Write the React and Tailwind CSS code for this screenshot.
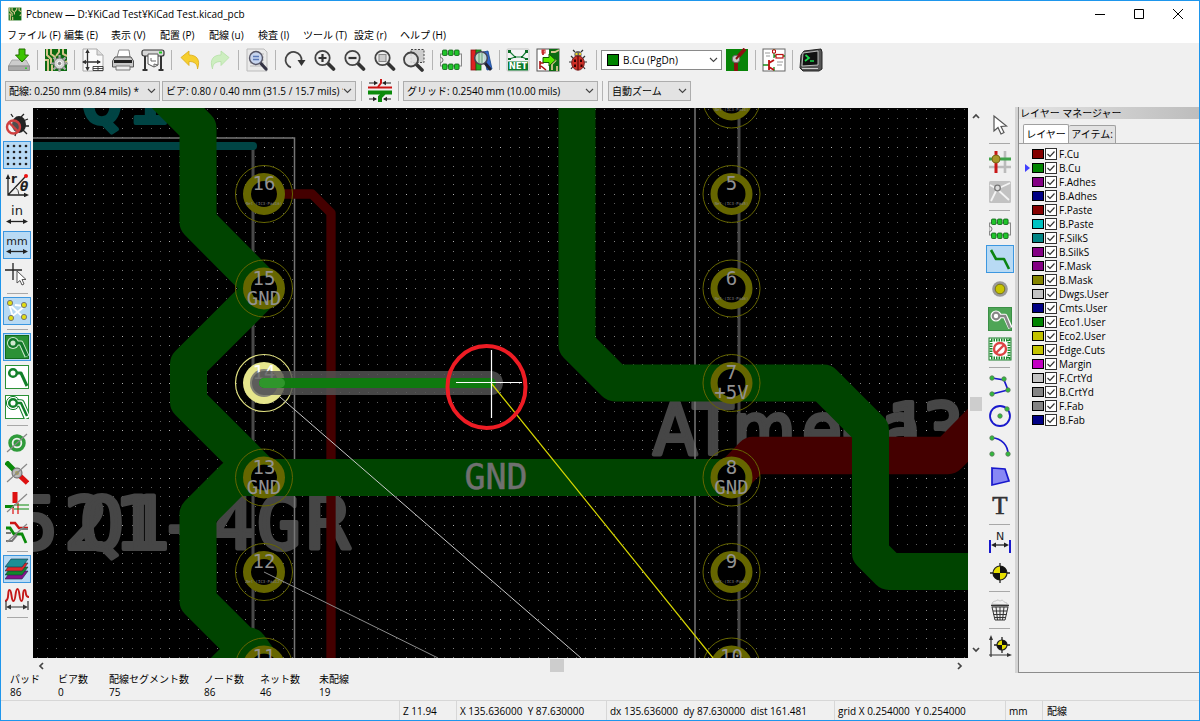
import React from "react";

const UI = "font-['Open_Sans','Noto_Sans_CJK_JP',sans-serif]";

const G = "#0a8a0a";
const R = "#cc1414";

/* ---------- small building blocks ---------- */

function Icon({ children, size = 24 }) {
  return (
    <svg width={size} height={size} viewBox="0 0 24 24" fill="none" aria-hidden="true" className="block">
      {children}
    </svg>
  );
}

function ToolButton({ label, active, children }) {
  return (
    <button
      type="button"
      aria-label={label}
      title={label}
      className={
        active
          ? "my-px flex h-7 w-7 shrink-0 items-center justify-center border border-[#3c97e0] bg-[#b8daf4]"
          : "flex h-[30px] w-[30px] shrink-0 items-center justify-center"
      }
    >
      {children}
    </button>
  );
}

function VSep() {
  return (
    <div className="flex h-6 w-[7px] shrink-0 justify-center">
      <div className="h-5 w-px self-center bg-[#b4b4b4]" />
    </div>
  );
}

function HSep({ tall }) {
  return (
    <div className={tall ? "flex h-[7px] w-full shrink-0 items-center justify-center" : "flex h-[6px] w-full shrink-0 items-center justify-center"}>
      <div className="h-px w-[21px] bg-[#a8a8a8]" />
    </div>
  );
}

function Chevron() {
  return (
    <svg width="9" height="6" viewBox="0 0 9 6" className="pointer-events-none absolute right-[4px] top-1/2 -translate-y-1/2">
      <path d="M1 1l3.500 3.500L8 1" fill="none" stroke="#444" strokeWidth="1.100" />
    </svg>
  );
}

function Combo({ label, value, width, white, swatch }) {
  return (
    <div className={"relative shrink-0 " + width}>
      <select
        aria-label={label}
        className={
          "block h-5 w-full appearance-none border pr-3 text-[10px] leading-4 text-black outline-none " +
          (white ? "border-[#8a8a8a] bg-white pl-[21px]" : "border-[#adadad] bg-[#e3e3e3] pl-[3px]")
        }
      >
        <option>{value}</option>
      </select>
      {swatch && <span className="pointer-events-none absolute left-[6px] top-[4px] h-3 w-3 border border-black bg-[#008400]" />}
      <Chevron />
    </div>
  );
}

/* ---------- icons ---------- */

const BoardBg = (
  <>
    <rect x="1" y="1" width="22" height="22" fill="#0c6b12" />
    <path d="M3 1v6l4 4v5M7 1v5l4 3v4M15 1v3l-3 4M19 1v5l4 2M1 12h3v11M8 17v6M23 13l-3 2" stroke="#d6c58c" strokeWidth="2" />
  </>
);

const Lens = ({ sign }) => (
  <>
    <path d="M16 15.500l5.500 5.500" stroke="#333" strokeWidth="3.600" strokeLinecap="round" />
    <circle cx="10.500" cy="10" r="7.200" fill="#ededed" stroke="#444" strokeWidth="1.800" />
    {sign}
  </>
);

const Chip = (
  <>
    <rect x="1.500" y="6" width="21" height="12" fill="#f0f0f0" stroke="#888" />
    <path d="M1.500 9.500a2.500 2.500 0 010 5" stroke="#777" fill="#f0f0f0" />
    {[4, 10, 16].map((x) => (
      <g key={x}>
        <rect x={x - 0.5} y="2" width="4.600" height="5.500" rx="1" fill="#1fc42a" stroke="#0d5c14" strokeWidth=".8" />
        <rect x={x - 0.5} y="16" width="4.600" height="5.500" rx="1" fill="#1fc42a" stroke="#0d5c14" strokeWidth=".8" />
      </g>
    ))}
  </>
);

const Strike = <path d="M2 21L22 3" stroke="#888" strokeWidth="1.200" />;

const Target = ({ cx = 12, cy = 12, r = 7 }) => (
  <g>
    <path d={`M${cx} ${cy - r - 3}V${cy + r + 3}M${cx - r - 3} ${cy}H${cx + r + 3}`} stroke="#222" strokeWidth="1.300" />
    <circle cx={cx} cy={cy} r={r} fill="#e6df00" stroke="#222" strokeWidth="1.200" />
    <path d={`M${cx} ${cy}V${cy - r}A${r} ${r} 0 01${cx + r} ${cy}zM${cx} ${cy}V${cy + r}A${r} ${r} 0 01${cx - r} ${cy}z`} fill="#111" />
  </g>
);

const Node = ({ x, y }) => <circle cx={x} cy={y} r="2.200" fill="#2ebd3a" stroke="#5b7a5b" strokeWidth=".9" />;

const topIcons = {
  save: (
    <>
      <path d="M5 12h14l3.500 6H1.500z" fill="#ccc" stroke="#999" strokeWidth=".8" />
      <path d="M1.500 18h21v4.500h-21z" fill="#a9a9a9" stroke="#888" strokeWidth=".8" />
      <rect x="18" y="19.500" width="2" height="1.500" fill="#3c3" />
      <path d="M12 1h6v6h3.500L15 14 8.500 7H12z" fill="#3cc400" stroke="#226f00" />
    </>
  ),
  board: (
    <>
      {BoardBg}
      <path d="M15.500 7v17M7 15.500h17M9.500 9.500l12 12M21.500 9.500l-12 12" stroke="#aaa" strokeWidth="2.200" />
      <circle cx="15.500" cy="15.500" r="5.500" fill="#d4d4d4" stroke="#777" />
      <circle cx="15.500" cy="15.500" r="2.200" fill="#888" stroke="#fff" />
    </>
  ),
  page: (
    <>
      <path d="M2 1h14l6 6v16H2z" fill="#fafafa" stroke="#aaa" />
      <path d="M16 1v6h6" fill="#ddd" stroke="#aaa" />
      <path d="M6.500 3v19M2 14h17" stroke="#333" strokeWidth="1.300" />
      <path d="M6.500 1l2.200 4H4.300zM6.500 23l2.200-4H4.300zM1 14l4-2.200v4.400zM20 14l-4-2.200v4.400z" fill="#333" />
      <path d="M12 18.500h10v4H12zM17 18.500v4M12 20.500h10" fill="#fff" stroke="#333" strokeWidth=".9" />
    </>
  ),
  print: (
    <>
      <path d="M6 9L8 2h10l1 7z" fill="#fff" stroke="#888" />
      <path d="M4 9h16l2.500 4v6h-21v-6z" fill="#c9c9c9" stroke="#555" />
      <path d="M3 12h18v3H3z" fill="#222" />
      <path d="M5 18h14v4H5z" fill="#eee" stroke="#777" />
    </>
  ),
  plot: (
    <>
      <rect x="1" y="2" width="22" height="6" rx="2" fill="#d8d8d8" stroke="#333" strokeWidth="1.200" />
      <rect x="18" y="3.500" width="3" height="2" fill="#2c2" />
      <path d="M4 8v14M20 8v14M1.500 22h5M17.500 22h5" stroke="#333" strokeWidth="2" />
      <path d="M7 6h10v11l-4 2-6-3z" fill="#fff" stroke="#555" />
      <path d="M10 10v3h5M17 17l-4-1v3" stroke="#666" />
    </>
  ),
  undo: <path d="M3 9.500l8-6.500v4c7 0 12 4 8.500 14 0-5-3-7.500-8.500-7.500v4z" fill="#f6cf2f" stroke="#dba915" strokeWidth=".8" />,
  redo: <path d="M21 9.500L13 3v4C6 7 1 11 4.500 21c0-5 3-7.500 8.500-7.500v4z" fill="#cdeec0" stroke="#b4dfa5" strokeWidth=".8" />,
  find: (
    <>
      <path d="M2 1h17l3 3v19H2z" fill="#e9e9e9" stroke="#bbb" />
      <path d="M5 6h14M5 9h14M5 12h14M5 15h14M5 18h14" stroke="#b9b9b9" />
      <path d="M15.500 15l5.500 6" stroke="#334" strokeWidth="3.200" strokeLinecap="round" />
      <circle cx="11" cy="10" r="6.500" fill="#c6d4ee" stroke="#556" strokeWidth="1.400" />
      <path d="M8 8.500h6M8 11.500h6" stroke="#5a78b8" strokeWidth="1.400" />
    </>
  ),
  redraw: (
    <>
      <path d="M9 19.500A8 8 0 1119.500 13" stroke="#444" strokeWidth="1.800" />
      <path d="M15.500 12h8l-4 6z" fill="#333" />
    </>
  ),
  zin: <Lens sign={<path d="M6.500 10h8M10.500 6v8" stroke="#333" strokeWidth="2.200" />} />,
  zout: <Lens sign={<path d="M6.500 10h8" stroke="#333" strokeWidth="2.200" />} />,
  zfit: <Lens sign={<rect x="7" y="6.500" width="7" height="7" fill="#ccc" stroke="#888" />} />,
  zsel: (
    <>
      <rect x="9" y="1.500" width="13" height="13" fill="#ccc" stroke="#444" strokeDasharray="2 1.500" />
      <path d="M14 16l6 6" stroke="#333" strokeWidth="3.600" strokeLinecap="round" />
      <circle cx="9" cy="11.500" r="7" fill="#e4e4e4" fillOpacity=".85" stroke="#444" strokeWidth="1.800" />
    </>
  ),
  chip: Chip,
  lib: (
    <>
      <rect x="2" y="2" width="5" height="20" fill="#d22" stroke="#811" strokeWidth=".8" />
      <rect x="7" y="2" width="5" height="20" fill="#2a2" stroke="#161" strokeWidth=".8" />
      <path d="M14 4l5-1 4 18-5 1z" fill="#36c" stroke="#148" strokeWidth=".8" />
      <path d="M16 15l5 6" stroke="#223" strokeWidth="3" strokeLinecap="round" />
      <circle cx="12" cy="10" r="6.300" fill="#cfe3dc" fillOpacity=".9" stroke="#445" strokeWidth="1.500" />
      <path d="M10 5v10M13 5v10" stroke="#5b9d74" />
    </>
  ),
  net: (
    <>
      <rect x="1" y="1" width="22" height="22" rx="1" fill="#f4f4f4" stroke="#c4c4c4" />
      <path d="M3.500 3.500L9 9h7l4.500-5.500M3.500 11L9 9M20.500 11L16 9" stroke="#18803a" strokeWidth="1.200" />
      <path d="M2 2h3v3H2zM19 2h3v3h-3zM2 10h3v2H2zM19 10h3v2h-3zM8 8h2v2H8zM15 8h2v2h-2z" fill="#0b6d24" />
      <rect x="2" y="13.500" width="20" height="9" fill="#0c7a2c" />
      <text x="12" y="21.200" textAnchor="middle" fontSize="8.500" fontWeight="700" fill="#fff" fontFamily="DejaVu Sans">NET</text>
    </>
  ),
  upd: (
    <>
      <rect x="1" y="1" width="22" height="22" fill="#fff" stroke="#555" />
      <path d="M13 1h10v22H13z" fill="#0c6b12" />
      <path d="M15 4h4l4-2M16 22v-6l4-4M21 23v-5" stroke="#d6c58c" strokeWidth="1.800" />
      <path d="M7 2v5M4 13v8M4 15h3l3-3M5 18l5 4" stroke="#a11" strokeWidth="1.600" />
      <rect x="6" y="2" width="3" height="3" stroke="#c22" />
      <path d="M7 9.500h6V6l6.500 6L13 18v-3.500H7z" fill="#5be800" stroke="#125800" />
    </>
  ),
  bug: (
    <>
      <path d="M5 8l3 3M19 8l-3 3M3 14h4M21 14h-4M5 21l3-4M19 21l-3-4M9 4L7 2M15 4l2-2" stroke="#333" strokeWidth="1.200" />
      <circle cx="12" cy="6.500" r="3.600" fill="#666" />
      <path d="M9.500 5h2v2h-2zM13 5h2v2h-2z" fill="#e8cf20" />
      <ellipse cx="12" cy="15" rx="6.300" ry="7.200" fill="#cf2f26" stroke="#7a2020" />
      <path d="M12 8v14" stroke="#400" />
      <path d="M8 11.500h2V14H8zM14 11.500h2V14h-2zM8 16.500h2V19H8zM14.500 16.500h2V19h-2z" fill="#300" />
    </>
  ),
  layerpair: (
    <>
      <rect x="1" y="1" width="22" height="22" fill="#078407" />
      <path d="M11 23V11l9-10" stroke="#8b1010" strokeWidth="3.800" />
      <circle cx="11" cy="11" r="3.800" fill="#c9c9c9" stroke="#666" />
      <path d="M11 11l3-3.500" stroke="#8b1010" strokeWidth="2" />
    </>
  ),
  sch: (
    <>
      <rect x="1" y="1" width="22" height="22" fill="#fff" stroke="#666" />
      <path d="M12 1v9M12 8h11" stroke="#1a8a1a" strokeWidth="1.300" />
      <path d="M1 17h6M12 19v4" stroke="#1a8a1a" strokeWidth="1.300" />
      <rect x="14" y="6.500" width="7" height="3.500" fill="#fff" stroke="#b11" strokeWidth="1.200" />
      <path d="M10.500 2h3v3h-3z" fill="#fff" stroke="#b11" />
      <path d="M7 12v10M7 15l5-3M7 19l5 3" stroke="#b11" strokeWidth="1.800" />
      <path d="M3 5h5M4 8h4M15 14h6M15 17h5" stroke="#999" />
    </>
  ),
  console: (
    <>
      <path d="M5 3l17-2 1 3v17l-3 2H4l-3-3 1-13z" fill="#555" stroke="#222" />
      <path d="M4 5l15-2v14l-16 1z" fill="#111" stroke="#ddd" strokeWidth=".8" />
      <path d="M6.500 7l3.500 3-4 3M11 13h4" stroke="#19d84a" strokeWidth="1.700" />
      <path d="M3 20.500h16" stroke="#ccc" />
    </>
  ),
  width: (
    <>
      <path d="M0 8.500h24" stroke={R} strokeWidth="2" />
      <path d="M0 13.500h24" stroke={G} strokeWidth="4" />
      <path d="M13 0v4l-3 4" stroke={R} strokeWidth="2" />
      <path d="M16 14l-4 4v5" stroke={G} strokeWidth="4" />
      <path d="M1 4h7M23 4h-7M1 20h7M23 20h-7" stroke="#222" strokeWidth="1.100" />
      <path d="M10 4L6 1.800v4.400zM14 4l4-2.200v4.400zM9 20l-4-2.200v4.400zM15 20l4-2.200v4.400z" fill="#222" />
    </>
  ),
};

const Pad = ({ ring, fill, lead }) => (
  <>
    <path d="M9 8h7l6 13" stroke={ring} strokeWidth={lead} strokeLinejoin="round" />
    <circle cx="8" cy="8" r="3.800" fill={fill} stroke={ring} strokeWidth="2.500" />
  </>
);

const leftIcons = {
  drc: (
    <>
      <path d="M8 4L6 1M16 4l3-3M18 8l5-2M19 13h5M18 17l4 4M11 19l-1 4" stroke="#222" strokeWidth="1.300" />
      <ellipse cx="14" cy="11.500" rx="7" ry="8.500" fill="#222" />
      <circle cx="8.500" cy="14" r="6.500" fill="#fff" fillOpacity=".2" stroke="#cf4040" strokeWidth="2.400" />
      <path d="M4 9.500l9 9" stroke="#cf4040" strokeWidth="2.400" />
    </>
  ),
  grid: (
    <>
      {[3, 9, 15, 21].map((y) => [3, 9, 15, 21].map((x) => <circle key={x + "-" + y} cx={x} cy={y} r="1.300" fill="#222" />))}
    </>
  ),
  polar: (
    <>
      <path d="M3 4v18h18M3 22L20 4" stroke="#222" strokeWidth="1.300" />
      <path d="M3 1l2.300 5H.7zM24 22l-5-2.300v4.600z" fill="#222" />
      <path d="M10 14q4 3 4 8" stroke="#444" />
      <circle cx="21" cy="3" r="2" fill="#e11" />
      <text x="6" y="10" fontSize="12" fontWeight="700" fontFamily="DejaVu Sans" fill="#222">r</text>
      <text x="15" y="18" fontSize="12" fontWeight="700" fontStyle="italic" fontFamily="DejaVu Sans" fill="#222">θ</text>
    </>
  ),
  inch: (
    <>
      <text x="12" y="12" textAnchor="middle" fontSize="13" fontFamily="DejaVu Sans" fill="#222">in</text>
      <path d="M4 18.500h16" stroke="#222" strokeWidth="1.300" />
      <path d="M1 18.500l5-2.600v5.200zM23 18.500l-5-2.600v5.200z" fill="#222" />
    </>
  ),
  mm: (
    <>
      <text x="12" y="12" textAnchor="middle" fontSize="11" fontFamily="DejaVu Sans" fill="#222">mm</text>
      <path d="M4 18.500h16" stroke="#222" strokeWidth="1.300" />
      <path d="M1 18.500l5-2.600v5.200zM23 18.500l-5-2.600v5.200z" fill="#222" />
    </>
  ),
  cursor: (
    <>
      <path d="M8 0v17M0 7h17" stroke="#222" strokeWidth="1.300" />
      <path d="M12 8v12l3-2.500 2 4.500 2-1-2-4.500h4z" fill="#fff" stroke="#555" />
    </>
  ),
  rats: (
    <>
      <path d="M4 5l15 14M5 19L20 7M4 5l4 13M20 7L10 6" stroke="#fff" strokeWidth="1.800" />
      {[[5, 4], [19, 6], [6, 19], [19, 18]].map(([x, y]) => (
        <circle key={x + "," + y} cx={x} cy={y} r="2.600" fill="#e1dc10" stroke="#777" />
      ))}
    </>
  ),
  zoneFill: (
    <>
      <rect x=".500" y=".500" width="23" height="23" fill="#2b9136" stroke="#116b1c" />
      <path d="M9 8h7l6 13.500" stroke="#cfe8cf" strokeWidth="5" strokeLinejoin="round" />
      <circle cx="8" cy="8" r="6" fill="#cfe8cf" />
      <Pad ring="#12772a" fill="#cfe8cf" lead={3} />
    </>
  ),
  zoneOff: (
    <>
      <rect x=".500" y=".500" width="23" height="23" fill="#fff" stroke="#2b9136" />
      <Pad ring="#12802a" fill="#fff" lead={3} />
    </>
  ),
  zoneOut: (
    <>
      <rect x=".500" y=".500" width="23" height="23" fill="#fff" stroke="#2b9136" />
      <circle cx="8" cy="8" r="6.600" fill="#fff" stroke="#12802a" />
      <path d="M12 8h4l6 14" stroke="#12802a" strokeWidth="7.500" strokeLinejoin="round" />
      <path d="M9 8h7l6.500 15" stroke="#fff" strokeWidth="5.500" strokeLinejoin="round" />
      <Pad ring="#12802a" fill="#fff" lead={2.5} />
    </>
  ),
  pads: (
    <>
      <circle cx="12" cy="12" r="7" stroke="#2f9b3a" strokeWidth="3.500" />
      <circle cx="12" cy="12" r="3.500" fill="#2f9b3a" />
      {Strike}
    </>
  ),
  vias: (
    <>
      <path d="M1 1l9 9" stroke={G} strokeWidth="5" />
      <path d="M13 13l9.500 9" stroke="#d11" strokeWidth="5" />
      <circle cx="12" cy="12" r="5" fill="#b9b9b9" stroke="#666" />
      <circle cx="12" cy="12" r="2" fill="#aaa05a" />
      {Strike}
    </>
  ),
  tracks: (
    <>
      <path d="M10 1v11" stroke="#d11" strokeWidth="5" />
      <path d="M8 14v9M13 12v11" stroke="#d11" strokeWidth="1.200" />
      <path d="M0 15.500h9" stroke={G} strokeWidth="3" />
      <path d="M9 14h15M9 18h15" stroke={G} strokeWidth="1.200" />
      {Strike}
    </>
  ),
  contrast: (
    <>
      <path d="M5 2h5l4 5h9" stroke={R} strokeWidth="2.500" />
      <path d="M1 7h4l4 6h8l4 9" stroke={G} strokeWidth="2.800" />
      <path d="M1 12h5M1 20h6l5-6M15 8h8" stroke="#777" strokeWidth="2" />
      {Strike}
    </>
  ),
  layers: (
    <>
      {[["#8a108a", 14], ["#12872a", 10], ["#e02828", 6], ["#1d8f95", 2]].map(([c, y]) => (
        <path key={c} d={`M6 ${y}h17l-6 8H0z`} fill={c} stroke="#134" strokeWidth=".6" />
      ))}
    </>
  ),
  micro: (
    <>
      <path d="M0 14c5 0 2-11 4.500-11S6 14 8.500 14 10 2 12.500 2 14 14 16.500 14 17 3 19.500 3 19 10 24 10" stroke="#c41818" strokeWidth="1.900" />
      <path d="M1 14v9M23 14v9M4 20h16" stroke="#333" strokeWidth="1.200" />
      <path d="M1 20l5-2.500v5zM23 20l-5-2.500v5z" fill="#333" />
    </>
  ),
};

const rightIcons = {
  select: <path d="M6 3v15l4-3.500 3 6.500 3-1.500-3-6 5.500-.5z" fill="#fff" stroke="#555" strokeWidth="1.200" />,
  highlight: (
    <>
      <path d="M17 1v22M1 17h22" stroke="#bbb" strokeWidth="2.600" />
      <path d="M8 1v22" stroke="#c81616" strokeWidth="3" />
      <path d="M1 9h22" stroke="#3fa34a" strokeWidth="3" />
      <circle cx="8" cy="9" r="4" fill="#a8972a" stroke="#7a6a18" />
    </>
  ),
  localRats: (
    <>
      <rect x="1" y="1" width="22" height="22" rx="1.500" fill="#c2c2c2" />
      <path d="M9 9L2 5M9 9l13-6M9 9L3 21M9 9l12 11" stroke="#f4f4f4" strokeWidth="1.800" />
      <circle cx="9.500" cy="8" r="2.800" fill="#ddd" stroke="#777" strokeWidth="1.300" />
    </>
  ),
  chip: Chip,
  route: <path d="M3 3l5 9h8l5 10" stroke="#0b8413" strokeWidth="2.600" strokeLinejoin="round" />,
  via: (
    <>
      <circle cx="12" cy="12" r="7.800" fill="#999" />
      <circle cx="12" cy="12" r="4.800" fill="#c8c400" stroke="#77731a" />
    </>
  ),
  zone: (
    <>
      <rect x=".500" y=".500" width="23" height="23" fill="#4ea556" stroke="#3b8f45" />
      <path d="M9 9h8l5.500 12" stroke="#fff" strokeWidth="4.600" strokeLinejoin="round" />
      <circle cx="8" cy="9" r="5.500" fill="#fff" />
      <path d="M9 9h8l5 12" stroke="#888" strokeWidth="2.600" />
      <circle cx="8" cy="9" r="3.300" fill="#fff" stroke="#888" strokeWidth="2.200" />
    </>
  ),
  keepout: (
    <>
      <rect x="1" y="1" width="22" height="22" fill="#fff" stroke="#1a7f2b" strokeWidth="1" />
      <rect x="3" y="3" width="18" height="18" stroke="#1a8a2b" strokeWidth="3" strokeDasharray="1.500 1" />
      <circle cx="12" cy="12" r="6" fill="#fff" stroke="#dc4444" strokeWidth="2.400" />
      <path d="M8 16l8-8" stroke="#dc4444" strokeWidth="2.400" />
    </>
  ),
  line: (
    <>
      <path d="M4 4l12 2 4 10L4 20" stroke="#1818cc" strokeWidth="1.700" />
      <Node x={4} y={4} /><Node x={16} y={5} /><Node x={20} y={16} /><Node x={4} y={20} />
    </>
  ),
  circle: (
    <>
      <circle cx="12" cy="12" r="10" stroke="#1818cc" strokeWidth="1.800" />
      <Node x={12} y={12} /><Node x={19} y={5} />
    </>
  ),
  arc: (
    <>
      <path d="M4 4c10 0 16 8 16 16" stroke="#1818cc" strokeWidth="1.700" />
      <Node x={4} y={4} /><Node x={4} y={20} /><Node x={20} y={20} />
    </>
  ),
  poly: <path d="M4 4l13 1 4 12-17 4z" fill="#8888f4" stroke="#1818cc" strokeWidth="1.700" />,
  text: <text x="12" y="20" textAnchor="middle" fontSize="25" fontFamily="Liberation Serif" fill="#333" stroke="#333" strokeWidth=".7">T</text>,
  dim: (
    <>
      <text x="12" y="9" textAnchor="middle" fontSize="11" fontFamily="DejaVu Sans" fill="#222">N</text>
      <path d="M2 9v13M22 9v13" stroke="#1818cc" strokeWidth="2" />
      <path d="M5 14h14" stroke="#222" strokeWidth="1.300" />
      <path d="M3 14l5-2.500v5zM21 14l-5-2.500v5z" fill="#222" />
    </>
  ),
  target: <Target />,
  trash: (
    <>
      <path d="M4 6c1-4 4-2 5-4 3 0 2 2 5 0 2 1 1 2 5 3v2z" fill="#f0f0f0" stroke="#c4c4c4" />
      <path d="M3 7.500h18" stroke="#333" strokeWidth="1.600" />
      <path d="M4 9l3 13h10l3-13z" fill="#eee" stroke="#333" />
      <path d="M8 9l1.500 13M12 9v13M16 9l-1.500 13M5 13h14M5.500 16.500h13M6.500 19.500h11" stroke="#333" />
    </>
  ),
  origin: (
    <>
      <path d="M3 4v18M1 20h20" stroke="#333" strokeWidth="1.200" />
      <path d="M3 0l2 5H1zM24 20l-5-2v4z" fill="#333" />
      <Target cx={14} cy={10} r={5} />
    </>
  ),
};

/* ---------- board drawing ---------- */

function dots(level) {
  let d = "";
  for (let i = -25; i <= 75; i++) {
    for (let j = -30; j <= 30; j++) {
      const onMajor = i % 5 === 0 && j % 5 === 0;
      const onMid = !onMajor && (i % 5 === 0 || j % 5 === 0);
      const kind = onMajor ? 2 : onMid ? 1 : 0;
      if (kind !== level) continue;
      d += `M${Math.round(264 + i * 9.455)} ${Math.round(383 + j * 9.455)}h1v1h-1z`;
    }
  }
  return d;
}
const minorDots = dots(0);
const midDots = dots(1);
const majorDots = dots(2);

const leftPads = [
  { n: "16", y: 194, net: "Net-(IC3-Pad16)" },
  { n: "15", y: 288.5, big: "GND" },
  { n: "13", y: 477.5, big: "GND" },
  { n: "12", y: 572, net: "Net-(IC3-Pad12)" },
  { n: "11", y: 666.5 },
];
const rightPads = [
  { n: "4", y: 99.5, net: "Net-(IC3-Pad4)" },
  { n: "5", y: 194, net: "Net-(IC3-Pad5)" },
  { n: "6", y: 288.5, net: "Net-(IC3-Pad6)" },
  { n: "7", y: 383, big: "+5V" },
  { n: "8", y: 477.5, big: "GND" },
  { n: "9", y: 572, net: "Net-(IC3-Pad9)" },
  { n: "10", y: 666.5 },
];

function BoardPad({ x, p, hole }) {
  const mid = (21 + hole) / 2;
  return (
    <g>
      <circle cx={x} cy={p.y} r={hole} fill="#000" />
      <circle cx={x} cy={p.y} r={mid} fill="none" stroke="#666600" strokeWidth={21 - hole} />
      <circle cx={x} cy={p.y} r="28.500" fill="none" stroke="#666600" />
      <text x={x} y={p.y - 4} fontSize="19" fill="#929292">{p.n}</text>
      {p.big && <text x={x} y={p.y + 16} fontSize="19" fill="#929292">{p.big}</text>}
      {p.net && <text x={x} y={p.y + 11} fontSize="4" fill="#858585">{p.net}</text>}
    </g>
  );
}

const silkValue = [["5", 36], ["2", 86], ["1", 136], ["-", 180], ["4", 233], ["G", 279], ["R", 328]];
const silkRef = [["Q", 102], ["1", 148]];
const silkName = [["A", 675], ["T", 713], ["m", 764], ["e", 822], ["g", 862], ["a", 901], ["1", 908], ["3", 943]];

const Silk = ({ glyphs, y }) => glyphs.map(([c, x]) => <text key={c} x={x} y={y}>{c}</text>);

function Board() {
  return (
    <svg
      viewBox="33 108 935 550"
      preserveAspectRatio="xMinYMin slice"
      className="block h-full w-full bg-black"
      role="img"
      aria-label="PCB"
      fontFamily="'DejaVu Sans Mono', monospace"
    >
      <g shapeRendering="crispEdges">
        <path d={minorDots} fill="#5c5c5c" />
        <path d={midDots} fill="#808080" />
        <path d={majorDots} fill="#b4b4b4" />
      </g>

      <path d="M253 146V658M739 108V658" stroke="#484848" strokeWidth="3" />

      <g fontSize="73" strokeWidth="4" strokeLinejoin="round" textAnchor="middle">
        <g fill="#464646" stroke="#464646">
          <Silk glyphs={silkValue} y="549" />
          <Silk glyphs={silkRef} y="549" />
        </g>
        <g fill="#004444" stroke="#004444">
          <Silk glyphs={silkRef} y="123" />
        </g>
      </g>
      <g fontSize="71" fill="#464646" stroke="#464646" strokeWidth="4" strokeLinejoin="round" textAnchor="middle" fontFamily="'DejaVu Sans Condensed','DejaVu Sans',sans-serif">
        <Silk glyphs={silkName} y="454" />
      </g>
      <path d="M33 138H294.500V658M695 108V658" fill="none" stroke="#767676" strokeWidth="1.500" />
      <path d="M33 146H253" stroke="#004444" strokeWidth="8" strokeLinecap="round" />

      <g fill="none" stroke="#440000" strokeLinejoin="round" strokeLinecap="round">
        <path d="M264 194H312L331 213V670" strokeWidth="9.300" />
        <path d="M731.500 477.500L753 455.500H948L990 413" strokeWidth="37.300" />
      </g>
      <g fill="none" stroke="#004400" strokeWidth="37" strokeLinejoin="round" strokeLinecap="round">
        <path d="M150 80L198 128V222L264 288.500L188.500 364V402L264 477.500H234.500L198 514V601L264 667L249 646L200 695" />
        <path d="M264 477.500H731.500" />
        <path d="M577 90V345L615 383H823.500L870.500 430V553L889 571.500H990" />
      </g>

      <text x="496" y="489" textAnchor="middle" fontSize="35" fill="#707070" stroke="#707070" strokeWidth=".5">GND</text>

      <g textAnchor="middle">
        {leftPads.map((p) => <BoardPad key={p.n} x={264} p={p} hole={13} />)}
        {rightPads.map((p) => <BoardPad key={p.n} x={731.5} p={p} hole={14} />)}
      </g>

      <circle cx="264" cy="383" r="21" fill="#e6e68c" />
      <circle cx="264" cy="383" r="28.500" fill="none" stroke="#e0e080" strokeWidth="1.200" />
      <circle cx="264" cy="383" r="14" fill="#707070" fillOpacity=".85" />
      <text x="264" y="379" textAnchor="middle" fontSize="19" fill="#fff">14</text>
      <path d="M264 383H491" stroke="#555" strokeOpacity=".82" strokeWidth="24" strokeLinecap="round" />
      <path d="M264 383H491" stroke="#0f7a0f" strokeWidth="10" strokeLinecap="round" />
      <path d="M264 383H280" stroke="#2f962b" strokeWidth="10" strokeLinecap="round" />

      <path d="M280 397L581 658" stroke="#c8c8c8" />
      <path d="M264 572L438 658" stroke="#8c8c8c" />
      <path d="M491 383L713 658" stroke="#d8d800" strokeWidth="1.200" />
      <path d="M491.500 350V418M456 382.500H522" stroke="#fff" strokeWidth="1.200" />
      <ellipse cx="486.500" cy="387" rx="39" ry="41" fill="none" stroke="#ee1c24" strokeWidth="4" />
    </svg>
  );
}

/* ---------- layer list ---------- */

const layers = [
  ["F.Cu", "bg-[#840000]"], ["B.Cu", "bg-[#008400]"], ["F.Adhes", "bg-[#840084]"], ["B.Adhes", "bg-[#000084]"],
  ["F.Paste", "bg-[#840000]"], ["B.Paste", "bg-[#00c2c2]"], ["F.SilkS", "bg-[#008484]"], ["B.SilkS", "bg-[#840084]"],
  ["F.Mask", "bg-[#840084]"], ["B.Mask", "bg-[#848400]"], ["Dwgs.User", "bg-[#c2c2c2]"], ["Cmts.User", "bg-[#000084]"],
  ["Eco1.User", "bg-[#008400]"], ["Eco2.User", "bg-[#c2c200]"], ["Edge.Cuts", "bg-[#c2c200]"], ["Margin", "bg-[#c200c2]"],
  ["F.CrtYd", "bg-[#c2c2c2]"], ["B.CrtYd", "bg-[#848484]"], ["F.Fab", "bg-[#848484]"], ["B.Fab", "bg-[#000084]"],
];

function LayerRow({ name, color, current }) {
  return (
    <li className="flex h-[14px] items-center">
      <span className="flex w-[7px] shrink-0">
        {current && (
          <svg width="5" height="8" viewBox="0 0 5 8"><path d="M0 0l5 4-5 4z" fill="#4040ff" /></svg>
        )}
      </span>
      <button type="button" aria-label={name} className={"h-[10px] w-3 shrink-0 border border-black " + color} />
      <label className="ml-px flex items-center gap-[2px] text-[10px] leading-[14px]">
        <span className="relative block h-3 w-3">
          <input type="checkbox" defaultChecked className="block h-3 w-3 appearance-none border border-[#333] bg-white" />
          <svg width="12" height="12" viewBox="0 0 12 12" className="pointer-events-none absolute inset-0">
            <path d="M2.500 6l2.500 2.500 4.500-5" fill="none" stroke="#333" strokeWidth="1.200" />
          </svg>
        </span>
        {name}
      </label>
    </li>
  );
}

function LayerManager() {
  return (
    <aside className="flex w-[181px] shrink-0 flex-col border-b border-l border-[#8c8c8c]">
      <h2 className="h-3 overflow-hidden bg-linear-to-r from-[#e4e4e4] to-[#bdbdbd] pl-px text-[10px] leading-3 text-black">レイヤー マネージャー</h2>
      <div role="tablist" className="mt-[5px] flex h-5 items-end border-b border-[#a0a0a0] pl-[4px] text-[10px]">
        <button type="button" role="tab" aria-selected="true" className="h-[19px] w-[46px] whitespace-nowrap rounded-t-xs border border-b-0 border-[#a0a0a0] bg-white">レイヤー</button>
        <button type="button" role="tab" aria-selected="false" className="h-[18px] w-[47px] whitespace-nowrap rounded-t-xs border border-b-0 border-l-0 border-[#a0a0a0] bg-[#e2e2e2]">アイテム:</button>
      </div>
      <ul className="mt-[3px] pl-[6px]">
        {layers.map(([n, c]) => <LayerRow key={n} name={n} color={c} current={n === "B.Cu"} />)}
      </ul>
    </aside>
  );
}

/* ---------- window ---------- */

const menus = ["ファイル (F)", "編集 (E)", "表示 (V)", "配置 (P)", "配線 (u)", "検査 (I)", "ツール (T)", "設定 (r)", "ヘルプ (H)"];

const topBar = ["save", "|", "board", "|", "page", "print", "plot", "|", "undo", "redo", "|", "find", "|", "redraw", "zin", "zout", "zfit", "zsel", "|", "chip", "lib", "|", "net", "upd", "bug", "|"];
const leftBar = ["drc", "grid", "polar", "inch", "mm", "cursor", "|", "rats", "|", "zoneFill", "zoneOff", "zoneOut", "|", "pads", "vias", "tracks", "contrast", "|", "layers", "micro", "|"];
const leftActive = ["grid", "mm", "rats", "zoneFill", "layers"];
const rightBar = ["select", "|", "highlight", "localRats", "|", "chip", "route", "via", "zone", "keepout", "|", "line", "circle", "arc", "poly", "text", "|", "dim", "target", "|", "trash", "|", "origin"];

const stats = [["パッド", "86"], ["ビア数", "0"], ["配線セグメント数", "75"], ["ノード数", "86"], ["ネット数", "46"], ["未配線", "19"]];

function Arrow({ d, label }) {
  return (
    <button type="button" aria-label={label} className="flex h-4 w-4 shrink-0 items-center justify-center">
      <svg width="8" height="8" viewBox="0 0 8 8"><path d={d} fill="none" stroke="#444" strokeWidth="1.700" /></svg>
    </button>
  );
}

export default function App() {
  return (
    <div className={"flex h-screen min-h-[700px] flex-col border border-[#1e96ec] bg-[#f0f0f0] text-black " + UI}>
      <header className="flex h-[26px] shrink-0 items-center bg-white pl-[7px]">
        <svg width="14" height="14" viewBox="0 0 24 24" fill="none" aria-hidden="true">{BoardBg}</svg>
        <h1 className="ml-1 flex-1 text-[10px] leading-4">Pcbnew — D:¥KiCad Test¥KiCad Test.kicad_pcb</h1>
        <div className="flex gap-[29px] pr-[16px]">
          <button type="button" aria-label="Minimize"><svg width="10" height="10" viewBox="0 0 10 10"><path d="M0 5.500h10" stroke="#000" /></svg></button>
          <button type="button" aria-label="Maximize"><svg width="10" height="10" viewBox="0 0 10 10"><path d="M.5.5h9v9h-9z" fill="none" stroke="#000" /></svg></button>
          <button type="button" aria-label="Close"><svg width="10" height="10" viewBox="0 0 10 10"><path d="M0 0l10 10M10 0L0 10" stroke="#000" /></svg></button>
        </div>
      </header>

      <nav className="grid h-4 shrink-0 grid-cols-[57px_47px_49px_49px_49px_45px_51px_46px_auto] bg-white pl-[6px] text-[10px] leading-4">
        {menus.map((m) => <button key={m} type="button" className="whitespace-nowrap text-left">{m}</button>)}
      </nav>

      <div className="flex h-[34px] shrink-0 items-center pl-[3px]">
        {topBar.map((k, i) => (k === "|" ? <VSep key={i} /> : <ToolButton key={i} label={k}><Icon>{topIcons[k]}</Icon></ToolButton>))}
        <Combo label="Layer" value="B.Cu (PgDn)" width="ml-px w-[121px]" white swatch />
        <ToolButton label="layer pair"><Icon>{topIcons.layerpair}</Icon></ToolButton>
        <VSep />
        <ToolButton label="schematic"><Icon>{topIcons.sch}</Icon></ToolButton>
        <VSep />
        <ToolButton label="console"><Icon>{topIcons.console}</Icon></ToolButton>
      </div>

      <div className="flex h-[30px] shrink-0 items-center pb-[2px] pl-[4px]">
        <Combo label="Track width" value="配線: 0.250 mm (9.84 mils) *" width="w-[155px]" />
        <Combo label="Via size" value="ビア: 0.80 / 0.40 mm (31.5 / 15.7 mils) *" width="ml-[2px] w-[194px]" />
        <div className="ml-[2px]"><VSep /></div>
        <ToolButton label="auto width"><Icon>{topIcons.width}</Icon></ToolButton>
        <VSep />
        <Combo label="Grid" value="グリッド: 0.2540 mm (10.00 mils)" width="ml-px w-[195px]" />
        <div className="ml-px"><VSep /></div>
        <Combo label="Zoom" value="自動ズーム" width="ml-[2px] w-[83px]" />
      </div>

      <main className="flex min-h-0 flex-1">
        <div className="flex w-8 shrink-0 flex-col items-center pt-[3px]">
          {leftBar.map((k, i) => (k === "|" ? <HSep key={i} /> : <ToolButton key={i} label={k} active={leftActive.includes(k)}><Icon>{leftIcons[k]}</Icon></ToolButton>))}
        </div>

        <div className="flex min-w-0 flex-1 flex-col pt-px">
          <div className="flex min-h-0 flex-1">
            <div className="min-w-0 flex-1 overflow-hidden"><Board /></div>
            <div className="flex w-4 shrink-0 flex-col items-center">
              <Arrow label="Scroll up" d="M1 6l3-3 3 3" />
              <div className="flex-[274]" />
              <div className="h-[14px] w-3 bg-[#cdcdcd]" />
              <div className="flex-[232]" />
              <Arrow label="Scroll down" d="M1 2l3 3 3-3" />
            </div>
          </div>
          <div className="flex h-[15px] shrink-0 items-center pr-4">
            <Arrow label="Scroll left" d="M6 1L3 4l3 3" />
            <div className="flex-[501]" />
            <div className="h-[13px] w-[14px] bg-[#cdcdcd]" />
            <div className="flex-[388]" />
            <Arrow label="Scroll right" d="M2 1l3 3-3 3" />
          </div>
        </div>

        <div className="flex w-[34px] shrink-0 flex-col items-center border-r-[3px] border-[#d4d4d4] pt-[3px]">
          {rightBar.map((k, i) => (k === "|" ? <HSep key={i} tall /> : <ToolButton key={i} label={k} active={k === "route"}><Icon>{rightIcons[k]}</Icon></ToolButton>))}
        </div>

        <LayerManager />
      </main>

      <dl className="grid h-[27px] shrink-0 grid-cols-[48px_51px_95px_56px_59px_auto] pl-[9px] text-[10px] leading-[13px]">
        {stats.map(([k, v]) => (
          <div key={k} className="whitespace-nowrap"><dt>{k}</dt><dd>{v}</dd></div>
        ))}
      </dl>

      <footer className="flex h-5 shrink-0 border-t border-[#d7d7d7] text-[10px] leading-5">
        <div className="flex-1" />
        <div className="w-[57px] border-l border-[#d7d7d7] pl-[3px]">Z 11.94</div>
        <div className="w-[150px] whitespace-pre border-l border-[#d7d7d7] pl-[3px]">{"X 135.636000  Y 87.630000"}</div>
        <div className="w-[228px] whitespace-pre border-l border-[#d7d7d7] pl-[3px]">{"dx 135.636000  dy 87.630000  dist 161.481"}</div>
        <div className="w-[171px] whitespace-pre border-l border-[#d7d7d7] pl-[3px]">{"grid X 0.254000  Y 0.254000"}</div>
        <div className="w-[37px] border-l border-[#d7d7d7] pl-[3px]">mm</div>
        <div className="w-[157px] border-l border-[#d7d7d7] pl-1">配線</div>
      </footer>
    </div>
  );
}
